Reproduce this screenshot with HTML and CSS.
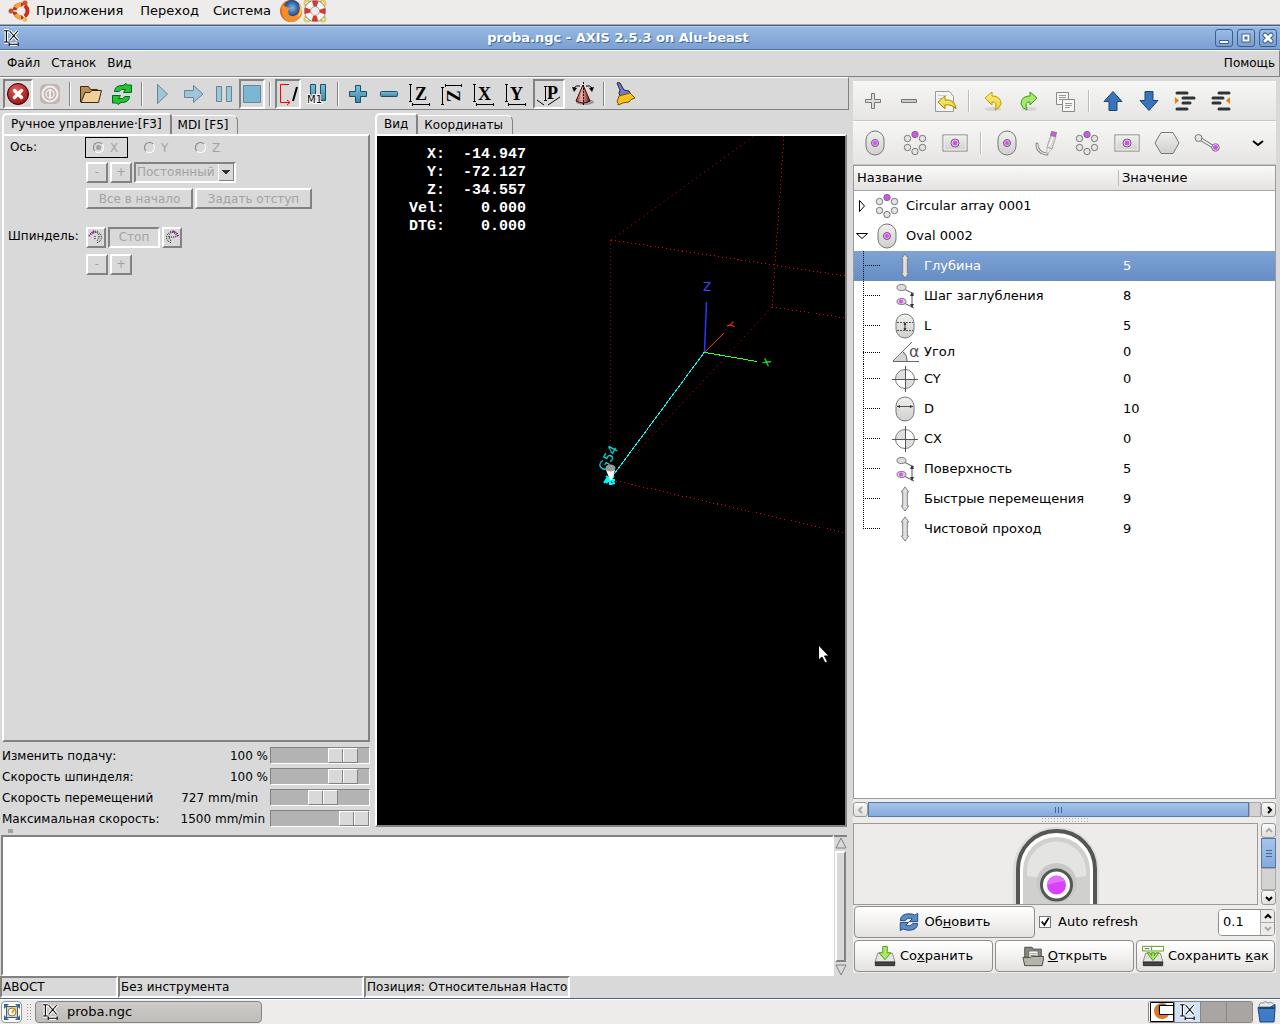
FILE: index.html
```html
<!DOCTYPE html>
<html lang="ru">
<head>
<meta charset="utf-8">
<title>proba.ngc - AXIS 2.5.3 on Alu-beast</title>
<link rel="stylesheet" href="styles.css">
</head>
<body>
<svg class="defs" width="0" height="0" aria-hidden="true">
  <defs>
    <linearGradient id="gray" x1="0" y1="0" x2="0" y2="1"><stop offset="0" stop-color="#f0f0ee"/><stop offset="1" stop-color="#cfcfcd"/></linearGradient>
    <linearGradient id="teal" x1="0" y1="0" x2="0" y2="1"><stop offset="0" stop-color="#7cc0da"/><stop offset="1" stop-color="#3d87aa"/></linearGradient>
    <linearGradient id="yellow" x1="0" y1="0" x2="0" y2="1"><stop offset="0" stop-color="#fff08a"/><stop offset="1" stop-color="#edd020"/></linearGradient>
    <linearGradient id="cone" x1="0" y1="0" x2="1" y2="0"><stop offset="0" stop-color="#8c3b3b"/><stop offset=".4" stop-color="#f3a8a0"/><stop offset="1" stop-color="#5c1c1c"/></linearGradient>
    <radialGradient id="red" cx=".4" cy=".3" r=".8"><stop offset="0" stop-color="#e85a5a"/><stop offset="1" stop-color="#9c0808"/></radialGradient>
    <radialGradient id="globe"><stop offset="0" stop-color="#7fb8e8"/><stop offset="1" stop-color="#1c4588"/></radialGradient>
  </defs>
  <symbol id="axis" viewBox="0 0 16 16"><g fill="none" stroke="#fff" stroke-width="3"><path d="M3 2v9M1 1.500h4M1 11.500h4M6 2l7 8M13 2l-7 8M5 13.500h9"/></g><path fill="none" stroke="#000" d="M3 2v9M1 1.500h4M1 11.500h4M6 2l7 8M13 2l-7 8M5 13.500h9M5.500 12v3M13.500 12v3"/></symbol>
  <symbol id="oval" viewBox="0 0 24 26"><rect x="3" y="1" width="18" height="24" rx="9" fill="url(#gray)" stroke="#777" /><circle cx="12" cy="13" r="3.500" fill="#d850f4" stroke="#666"/><circle cx="12" cy="13" r="2.500" fill="none" stroke="#f4c8ff" stroke-width=".7"/></symbol>
  <symbol id="ring" viewBox="0 0 24 26"><g fill="#e4e4e2" stroke="#777"><circle cx="4.500" cy="8.500" r="3.200"/><circle cx="19.500" cy="8.500" r="3.200"/><circle cx="4.500" cy="17.500" r="3.200"/><circle cx="19.500" cy="17.500" r="3.200"/><circle cx="12" cy="21.500" r="3.200"/><circle cx="12" cy="4.500" r="3.200" fill="#d850f4"/></g></symbol>
  <symbol id="rect" viewBox="0 0 26 26"><rect x="1" y="5" width="24" height="16" fill="url(#gray)" stroke="#777"/><rect x="2" y="6" width="22" height="14" fill="none" stroke="#f4f4f4"/><circle cx="13" cy="13" r="4" fill="#d850f4" stroke="#666"/><circle cx="13" cy="13" r="3" fill="none" stroke="#f4c8ff"/></symbol>
  <symbol id="depth" viewBox="0 0 26 28"><path fill="#e0e0de" stroke="#777" d="M13 1l4 5.500h-1.500v15h1.500L13 27l-4-5.500h1.500v-15H9z"/></symbol>
  <symbol id="step" viewBox="0 0 26 26"><path fill="none" stroke="#555" d="M12 6l10 5M12 20l10 5M20 10v14"/><path fill="#333" d="M18 13l2-4 2 4zM18 21l2 4 2-4z"/><ellipse cx="9.500" cy="4.500" rx="4.500" ry="3" fill="#ddd" stroke="#777"/><ellipse cx="9.500" cy="18.500" rx="4.500" ry="3" fill="#e4c0ea" stroke="#777"/><circle cx="9" cy="18.500" r="2" fill="#d850f4"/></symbol>
  <symbol id="len" viewBox="0 0 26 26"><rect x="4" y="1" width="18" height="24" rx="9" fill="url(#gray)" stroke="#777"/><path fill="none" stroke="#555" stroke-dasharray="2 1" d="M5 9.500h16M5 17.500h16"/><path stroke="#333" d="M13 10v7"/><path fill="#333" d="M11.500 12l1.500-3 1.500 3zM11.500 15l1.500 3 1.500-3z"/></symbol>
  <symbol id="dia" viewBox="0 0 26 26"><rect x="4" y="1" width="18" height="24" rx="9" fill="url(#gray)" stroke="#777"/><path stroke="#555" d="M5 10.500h16"/><path fill="#333" d="M5 10.500l3-1.500v3zM21 10.500l-3-1.500v3z"/></symbol>
  <symbol id="center" viewBox="0 0 26 26"><circle cx="13" cy="13" r="9" fill="#fff"/><path fill="#dededc" d="M13 13V4a9 9 0 0 0-9 9zM13 13v9a9 9 0 0 0 9-9z"/><circle cx="13" cy="13" r="9.500" fill="none" stroke="#777"/><path stroke="#555" d="M0 13.500h26M13.500 0v26"/></symbol>
</svg>

<nav class="panel top">
  <svg class="ic24" viewBox="0 0 24 24"><path fill="none" stroke="#e0902c" stroke-width="4" d="M8 8a7 7 0 0 1 5-2.500"/><circle cx="14" cy="12" r="6.500" fill="none" stroke="#c8301c" stroke-width="4"/><path fill="none" stroke="#f0a838" stroke-width="4" d="M14 5.500a6.500 6.500 0 0 0-5.500 3M8.500 15.500a6.500 6.500 0 0 0 5.500 3"/><path stroke="#edeceb" stroke-width="1.500" d="M5 12h5M18 5l-3 4M18 19l-3-4"/><circle cx="4" cy="12" r="2.500" fill="#c8502c"/><circle cx="18" cy="4" r="2.500" fill="#d85020"/><circle cx="18" cy="20.500" r="2.300" fill="#f0b840"/></svg>
  <a href="#">Приложения</a><a href="#">Переход</a><a href="#">Система</a>
  <svg class="ic24" viewBox="0 0 24 24"><circle cx="12" cy="12" r="11" fill="#d8661c"/><circle cx="13" cy="9" r="8" fill="url(#globe)"/><path fill="#f0902c" d="M3 5l4 3 4 1-2 3 1 4q5 3 9-1 3-4 1-11 6 8 1 15-6 6-13 3-7-5-5-17z"/><path fill="#ffd34a" d="M20 5q3 8-2 13 5-2 5-9z"/></svg>
  <svg class="ic24" viewBox="0 0 24 24"><g fill="none" stroke="#e4c858" stroke-width="2"><circle cx="4" cy="4" r="2.500"/><circle cx="20" cy="4" r="2.500"/><circle cx="4" cy="20" r="2.500"/><circle cx="20" cy="20" r="2.500"/></g><circle cx="12" cy="12" r="7.500" fill="none" stroke="#888" stroke-width="7"/><circle cx="12" cy="12" r="7.500" fill="none" stroke="#f8f8f8" stroke-width="5.500"/><circle cx="12" cy="12" r="7.500" fill="none" stroke="#d83828" stroke-width="5.500" stroke-dasharray="4.890 6.890" stroke-dashoffset="2.450"/></svg>
</nav>

<header class="titlebar">
  <svg class="ic18"><use href="#axis"/></svg>
  <h1>proba.ngc - AXIS 2.5.3 on Alu-beast</h1>
  <div class="wm">
    <button aria-label="Свернуть"><svg viewBox="0 0 16 16"><path fill="#fff" stroke="#3a6090" d="M3.500 10.500h9v3h-9z"/></svg></button>
    <button aria-label="Развернуть"><svg viewBox="0 0 16 16"><path fill="none" stroke="#3a6090" stroke-width="4" d="M5.500 5.500h5v5h-5z"/><path fill="none" stroke="#fff" stroke-width="2" d="M5.500 5.500h5v5h-5z"/></svg></button>
    <button aria-label="Закрыть"><svg viewBox="0 0 16 16"><path stroke="#3a6090" stroke-width="5" stroke-linecap="round" d="M5 5l6 6M11 5l-6 6"/><path stroke="#fff" stroke-width="3" stroke-linecap="round" d="M5 5l6 6M11 5l-6 6"/></svg></button>
  </div>
</header>

<nav class="menu"><a href="#">Файл</a><a href="#">Станок</a><a href="#">Вид</a><a href="#" class="help">Помощь</a></nav>

<main class="app">
<section class="axis">
  <div class="tools">
    <button class="on" aria-label="Аварийный стоп"><svg viewBox="0 0 24 24"><circle cx="12" cy="12" r="10.500" fill="url(#red)" stroke="#200"/><path stroke="#fff" stroke-width="3.500" stroke-linecap="round" d="M8.500 8.500l7 7M15.500 8.500l-7 7"/></svg></button>
    <button aria-label="Питание"><svg class="dis" viewBox="0 0 24 24"><rect x="2" y="2" width="20" height="20" rx="5" fill="#b8a098"/><circle cx="12" cy="12" r="7.500" fill="none" stroke="#fff" stroke-width="2"/><circle cx="12" cy="12" r="4" fill="none" stroke="#fff" stroke-width="1.500"/><path stroke="#fff" stroke-width="2" d="M12 7v10"/></svg></button>
    <i class="sep"></i>
    <button aria-label="Открыть файл"><svg viewBox="0 0 24 24"><path fill="#b98f55" stroke="#3a2a10" d="M2.500 20V4.500h8l2 3h7v4"/><path fill="#f1cf98" stroke="#3a2a10" d="M3 20.500l4-10h5l2-2h9.500l-3 12z"/></svg></button>
    <button aria-label="Перезагрузить"><svg viewBox="0 0 24 24"><path fill="#25c52a" stroke="#063" d="M4.500 9.500Q5 3 13 3.500l3-2 1.500 1.500h4v7.500h-8l2-3q-5-1-6.500 2zM19.500 14.500q-.5 6.500-8.500 6l-3 2-1.500-1.500h-4v-7.500h8l-2 3q5 1 6.500-2z"/></svg></button>
    <i class="sep"></i>
    <button aria-label="Пуск"><svg class="dis" viewBox="0 0 24 24"><path fill="#7ab8d8" stroke="#17506b" d="M7.500 2.500l10 9.500-10 9.500z"/></svg></button>
    <button aria-label="Шаг"><svg class="dis" viewBox="0 0 24 24"><path fill="#7ab8d8" stroke="#17506b" d="M2.500 8.500h9v-5l9.500 8.500-9.500 8.500v-5h-9z"/></svg></button>
    <button class="n" aria-label="Пауза"><svg class="dis" viewBox="0 0 24 24"><path fill="#7ab8d8" stroke="#17506b" d="M4.500 4.500h5v15h-5zM14.500 4.500h5v15h-5z"/></svg></button>
    <button class="n on" aria-label="Стоп"><svg class="dis" viewBox="0 0 24 24"><path fill="#3ea0d4" stroke="#17506b" d="M3.500 3.500h17v17h-17z"/></svg></button>
    <i class="sep"></i>
    <button class="n on" aria-label="Пропуск строк"><svg viewBox="0 0 24 24"><path fill="none" stroke="#f00" d="M13 2.500H4.500v18h9M11 18l3 2.500-3 2.500"/><path stroke="#000" stroke-width="2" d="M21 5l-4 14"/></svg></button>
    <button aria-label="Опциональный стоп"><svg viewBox="0 0 24 24"><path fill="url(#teal)" stroke="#17506b" d="M4.500 2.500h5v16h-5zM14.500 2.500h5v16h-5z"/><text x="1" y="21" font-family="DejaVu Sans" font-size="10" stroke="#fff" stroke-width="2" paint-order="stroke">M1</text></svg></button>
    <i class="sep"></i>
    <button aria-label="Приблизить"><svg viewBox="0 0 24 24"><path fill="url(#teal)" stroke="#17506b" d="M9.500 3.500h5v6h6v5h-6v6h-5v-6h-6v-5h6z"/></svg></button>
    <button class="m" aria-label="Отдалить"><svg viewBox="0 0 24 24"><rect x="3.500" y="9.500" width="17" height="5" rx="1" fill="url(#teal)" stroke="#17506b"/></svg></button>
    <button aria-label="Вид Z"><svg viewBox="0 0 24 24"><path fill="none" stroke="#000" d="M2.500 2v17M1 2.500h3M1 19.500h3M4 22.500h18M4.500 21v3M21.500 21v3"/><text x="7" y="18" class="ax">Z</text></svg></button>
    <button aria-label="Вид Z повёрнутый"><svg viewBox="0 0 24 24"><path fill="none" stroke="#000" d="M2.500 5v17M1 5.500h3M1 22.500h3M5 3.500h17M5.500 2v3M21.500 2v3"/><text class="ax" transform="translate(7 8) rotate(90)">Z</text></svg></button>
    <button aria-label="Вид X"><svg viewBox="0 0 24 24"><path fill="none" stroke="#000" d="M2.500 2v17M1 2.500h3M1 19.500h3M4 22.500h18M4.500 21v3M21.500 21v3"/><text x="6" y="18" class="ax">X</text></svg></button>
    <button aria-label="Вид Y"><svg viewBox="0 0 24 24"><path fill="none" stroke="#000" d="M2.500 2v17M1 2.500h3M1 19.500h3M4 22.500h18M4.500 21v3M21.500 21v3"/><text x="6" y="18" class="ax">Y</text></svg></button>
    <button class="w on" aria-label="Перспектива"><svg viewBox="0 0 24 24"><path fill="none" stroke="#000" d="M8.500 4v14M7 4.500h3M7 18.500h3M0 18l7 5M11 23l12-8"/><text x="10" y="17" class="ax">P</text></svg></button>
    <button class="w" aria-label="Вращение"><svg viewBox="0 0 24 24"><ellipse cx="14" cy="20" rx="9" ry="3" fill="#999"/><path fill="url(#cone)" stroke="#400" d="M12 3l7 16q-7 4-14 0z"/><path fill="none" stroke="#000" d="M3 6q2-3 6-2M21 6q-2-3-6-2"/><path d="M1 5l5 1-3 4zM23 5l-5 1 3 4z"/><path stroke="#000" stroke-dasharray="2 1" d="M12.500 0v24"/></svg></button>
    <i class="sep"></i>
    <button class="w" aria-label="Очистить"><svg viewBox="0 0 24 24"><path fill="#6f7cc8" stroke="#223" d="M4 1q2-1 3 0l4 7 5 1 2 4-10 4-2-6 1-3z"/><path fill="#f5c220" stroke="#7a5000" d="M6 14l11-3 5 5q-5 1-6 4-5 0-11 3 1-2-1-3z"/></svg></button>
  </div>

  <div class="work">
    <div class="side">
      <div class="tabs"><button class="tab cur">Ручное управление·[F3]</button><button class="tab">MDI [F5]</button></div>
      <div class="page manual">
        <span class="lab">Ось:</span>
        <div class="line radios">
          <label class="boxed"><input type="radio" name="ax" checked disabled>X</label><label><input type="radio" name="ax" disabled>Y</label><label><input type="radio" name="ax" disabled>Z</label>
        </div>
        <div class="line c2"><button class="tk s" disabled>-</button><button class="tk s" disabled>+</button>
          <select class="combo" aria-label="Шаг перемещения" disabled><option>Постоянный</option></select></div>
        <div class="line c2"><button class="tk home" disabled>Все в начало</button><button class="tk off" disabled>Задать отступ</button></div>
        <span class="lab low">Шпиндель:</span>
        <div class="line low">
          <button class="tk i" aria-label="Против часовой"><svg viewBox="0 0 16 16"><path fill="none" stroke="#000" stroke-dasharray="1 1" d="M2 5q6-6 11 1 2 6-5 8M5 4q6-2 6 4 0 3-3 4M7 7v3"/><path stroke="#a0a" stroke-dasharray="1 1" stroke-width="2" d="M1 7l5-5"/></svg></button><button class="tk stop" disabled>Стоп</button><button class="tk i" aria-label="По часовой"><svg viewBox="0 0 16 16"><path fill="none" stroke="#000" stroke-dasharray="1 1" d="M14 5Q8-1 3 6q-2 6 5 8M11 4Q5 2 5 8q0 3 3 4M5 8h6l4-2"/><path stroke="#a0a" stroke-dasharray="1 1" stroke-width="2" d="M9 2l5 5"/></svg></button>
        </div>
        <div class="line c2"><button class="tk s" disabled>-</button><button class="tk s" disabled>+</button></div>
      </div>
      <div class="sliders">
        <label for="s1">Изменить подачу:</label><output>100 %</output><input id="s1" type="range" min="0" max="120" value="100">
        <label for="s2">Скорость шпинделя:</label><output>100 %</output><input id="s2" type="range" min="0" max="120" value="100">
        <label for="s3">Скорость перемещений</label><output class="mm">727 mm/min</output><input id="s3" type="range" min="0" max="100" value="55">
        <label for="s4">Максимальная скорость:</label><output class="mx">1500 mm/min</output><input id="s4" type="range" min="0" max="100" value="100">
      </div>
    </div>
    <div class="viewer">
      <div class="tabs"><button class="tab cur">Вид</button><button class="tab">Координаты</button></div>
      <div class="page gl">
        <svg class="scene"><g transform="translate(-377 -136)">
          <path fill="none" stroke="#e00" stroke-dasharray="1 3" shape-rendering="crispEdges" d="M611 240l234 36M784 136l-12 171M772 307l73 11M612 480l233 53"/>
          <path fill="none" stroke="#a00" stroke-dasharray="1 3" shape-rendering="crispEdges" d="M610.500 240v230"/>
          <path fill="none" stroke="#e00" stroke-dasharray="1 4" d="M611 240L754 136M772 307L612 479"/>
          <path stroke="#0ff" shape-rendering="crispEdges" d="M704.500 352L612 477"/>
          <path stroke="#33f" stroke-width="1.500" d="M706.500 302l-2 50"/><path stroke="#f33" d="M705 352l19-19"/><path stroke="#3f3" shape-rendering="crispEdges" d="M705 352.500l52 9"/>
          <g class="gltext"><text x="703" y="291" fill="#44f">Z</text><text fill="#f33" font-size="10" transform="translate(726 323) rotate(75)">Y</text><text fill="#3f3" font-size="10" transform="translate(768 367) rotate(-60)">X</text><text fill="#0dd" font-size="13" transform="translate(606 472) rotate(-62)">G54</text></g>
          <path fill="none" stroke="#0ff" stroke-width="2" d="M605 480h10M606 476l8 6M614 476l-8 7M610 475v10M604 483l4-6M611 484l4-1"/><path fill="#fff" d="M606 470h9l-3 10h-2z"/><ellipse cx="610.500" cy="468" rx="5" ry="3.500" fill="#999"/>
          <path fill="#fff" stroke="#000" d="M818.500 645v15l3.500-3 3 6 2.500-1.500-3-5.500h4.500z"/>
        </g></svg>
        <pre class="hud">  X:  -14.947
  Y:  -72.127
  Z:  -34.557
Vel:    0.000
DTG:    0.000</pre>
      </div>
    </div>
  </div>

  <div class="sash"></div>
  <div class="log">
    <textarea aria-label="Программа" readonly></textarea>
    <div class="tkscroll"><svg viewBox="0 0 12 12"><path fill="#d9d9d9" stroke="#828282" d="M6 1l5 10H1z"/></svg><i></i><svg viewBox="0 0 12 12"><path fill="#d9d9d9" stroke="#828282" d="M6 11L1 1h10z"/></svg></div>
  </div>
  <footer class="status"><span class="a">АВОСТ</span><span class="b">Без инструмента</span><span class="c">Позиция: Относительная Настоящая</span></footer>
</section>

<aside class="cam">
  <div class="bar one">
    <button aria-label="Добавить"><svg viewBox="0 0 24 24"><path fill="#ddd" stroke="#777" d="M10.500 4.500h3v6h6v3h-6v6h-3v-6h-6v-3h6z"/></svg></button>
    <button aria-label="Удалить"><svg viewBox="0 0 24 24"><path fill="#ccc" stroke="#777" d="M4.500 10.500h15v3h-15z"/></svg></button>
    <button aria-label="Вернуть"><svg viewBox="0 0 24 24"><path fill="#f4f4f2" stroke="#999" d="M2.500 2.500h14l4 5v15h-18z"/><path stroke="#ccc" d="M5 6.500h9M5 9.500h6"/><path fill="url(#yellow)" stroke="#a08800" d="M5 13l7-6v4q10-1 11 9-4-5-11-4v4z"/></svg></button>
    <i class="vs"></i>
    <button aria-label="Отменить"><svg viewBox="0 0 24 24"><ellipse cx="12" cy="20" rx="8" ry="2" fill="#d4d4d2"/><path fill="url(#yellow)" stroke="#c09a10" d="M4 9l7-6v4q9 0 9 8-1 4-6 6 3-9-3-8v3z"/></svg></button>
    <button aria-label="Повторить"><svg viewBox="0 0 24 24"><ellipse cx="12" cy="20" rx="8" ry="2" fill="#d4d4d2"/><path fill="#a4e86c" stroke="#3f9a1c" d="M20 9l-7-6v4q-9 0-9 8 1 4 6 6-3-9 3-8v3z"/></svg></button>
    <button aria-label="Копировать"><svg viewBox="0 0 24 24"><g fill="#f6f6f4" stroke="#888"><path d="M3.500 3.500h12v12h-12z"/><path d="M9.500 10.500h12v12h-12z"/></g><path stroke="#999" d="M6 6.500h7M6 8.500h7M6 10.500h3M12 14.500h7M12 16.500h7M12 18.500h5"/></svg></button>
    <i class="vs"></i>
    <button aria-label="Вверх"><svg viewBox="0 0 24 24"><path fill="#3a74b8" stroke="#1c4578" d="M12 2.500l9 10h-5v9H8v-9H3z"/></svg></button>
    <button aria-label="Вниз"><svg viewBox="0 0 24 24"><path fill="#3a74b8" stroke="#1c4578" d="M12 21.500l9-10h-5v-9H8v9H3z"/></svg></button>
    <button aria-label="Увеличить отступ"><svg viewBox="0 0 24 24"><path stroke="#2e3436" stroke-width="3" stroke-linecap="round" d="M4 4h10M10 9h11M10 14h7M4 20h10"/><path fill="#f57900" d="M2 8v7l4-3.500z"/></svg></button>
    <button aria-label="Уменьшить отступ"><svg viewBox="0 0 24 24"><path stroke="#2e3436" stroke-width="3" stroke-linecap="round" d="M10 4h10M4 9h10M4 14h7M10 20h10"/><path fill="#f57900" d="M21 8v7l-4-3.500z"/></svg></button>
  </div>
  <div class="bar two">
    <button aria-label="Овал"><svg class="ic26"><use href="#oval"/></svg></button>
    <button aria-label="Круговой массив"><svg class="ic26"><use href="#ring"/></svg></button>
    <button aria-label="Прямоугольник"><svg class="ic26"><use href="#rect"/></svg></button>
    <i class="vs"></i>
    <button aria-label="Овал"><svg class="ic26"><use href="#oval"/></svg></button>
    <button aria-label="Карандаш"><svg class="ic26" viewBox="0 0 26 26"><path fill="none" stroke="#888" stroke-width="3" stroke-linecap="round" d="M3 14q0 9 10 10"/><path fill="none" stroke="#fff" d="M3 14q0 9 10 10"/><path fill="#f4ece0" stroke="#bbb" d="M13 17l5 2-5 5z"/><path fill="#dcd8dc" stroke="#aaa" d="M17 5l5 1-4 13-5-2z"/><path stroke="#fff" d="M19 7l-4 10"/><path fill="#d850f4" stroke="#977" d="M17.500 1.500l5 1-1 4-5-1z"/></svg></button>
    <button aria-label="Массив"><svg class="ic26"><use href="#ring"/></svg></button>
    <button aria-label="Карман"><svg class="ic26"><use href="#rect"/></svg></button>
    <button aria-label="Многоугольник"><svg class="ic26" viewBox="0 0 26 26"><path fill="url(#gray)" stroke="#777" d="M7 2.500h12l6 10.500-6 10.500H7L1 13z"/></svg></button>
    <button aria-label="Линия"><svg class="ic26" viewBox="0 0 26 26"><path stroke="#777" stroke-width="3.500" d="M5 8l16 10"/><path stroke="#eee" stroke-width="1.500" d="M5 8l16 10"/><circle cx="4.500" cy="8" r="3.500" fill="#e4e4e2" stroke="#777"/><circle cx="21.500" cy="17.500" r="3.800" fill="#f0e0f4" stroke="#777"/><circle cx="21.500" cy="17.500" r="2.500" fill="#d850f4"/></svg></button>
    <button class="more" aria-label="Ещё"><svg viewBox="0 0 24 24"><path fill="none" stroke="#000" stroke-width="2" d="M7 10l5 4 5-4"/></svg></button>
  </div>
  <div class="tree">
    <table>
      <thead><tr><th class="name">Название</th><th>Значение</th></tr></thead>
      <tbody>
      <tr><td><div class="node"><svg class="exp" viewBox="0 0 16 16"><path fill="#fff" stroke="#000" d="M5.500 2.500v11l5-5.500z"/></svg><svg class="ni"><use href="#ring"/></svg>Circular array 0001</div></td><td></td></tr>
      <tr><td><div class="node"><svg class="exp" viewBox="0 0 16 16"><path fill="#fff" stroke="#000" d="M2.500 5.500h11l-5.500 5z"/></svg><svg class="ni"><use href="#oval"/></svg>Oval 0002</div></td><td></td></tr>
      <tr class="sel"><td><div class="node kid"><i class="br"></i><svg class="ni"><use href="#depth"/></svg>Глубина</div></td><td>5</td></tr>
      <tr><td><div class="node kid"><i class="br"></i><svg class="ni"><use href="#step"/></svg>Шаг заглубления</div></td><td>8</td></tr>
      <tr><td><div class="node kid"><i class="br"></i><svg class="ni"><use href="#len"/></svg>L</div></td><td>5</td></tr>
      <tr><td><div class="node kid short"><i class="br"></i><svg class="ni" viewBox="0 0 30 22"><path fill="#d4d4d2" d="M4 20L14 10q4 4 3 10z"/><path fill="none" stroke="#666" d="M3 20.500h26M3 20L22 1M13 11q5 4 4 9"/><text x="19" y="16" font-family="DejaVu Sans" font-size="16" fill="#555">α</text></svg>Угол</div></td><td>0</td></tr>
      <tr><td><div class="node kid"><i class="br"></i><svg class="ni"><use href="#center"/></svg>CY</div></td><td>0</td></tr>
      <tr><td><div class="node kid"><i class="br"></i><svg class="ni"><use href="#dia"/></svg>D</div></td><td>10</td></tr>
      <tr><td><div class="node kid"><i class="br"></i><svg class="ni"><use href="#center"/></svg>CX</div></td><td>0</td></tr>
      <tr><td><div class="node kid"><i class="br"></i><svg class="ni"><use href="#step"/></svg>Поверхность</div></td><td>5</td></tr>
      <tr><td><div class="node kid"><i class="br"></i><svg class="ni"><use href="#depth"/></svg>Быстрые перемещения</div></td><td>9</td></tr>
      <tr><td><div class="node kid"><i class="br end"></i><svg class="ni"><use href="#depth"/></svg>Чистовой проход</div></td><td>9</td></tr>
      </tbody>
    </table>
  </div>
  <div class="hscroll"><button aria-label="Влево"><svg viewBox="0 0 12 12"><path fill="none" stroke="#aaa" stroke-width="2" d="M7 3L4 6l3 3"/></svg></button><span class="thumb"><i></i><i></i><i></i></span><span class="rest"></span><button aria-label="Вправо"><svg viewBox="0 0 12 12"><path fill="none" stroke="#000" stroke-width="2" d="M5 3l3 3-3 3"/></svg></button></div>
  <div class="grip"></div>
  <div class="preview">
    <div class="shot"><svg viewBox="0 0 88 80"><rect x="1" y="3" width="86" height="140" rx="43" fill="#dddddb"/><rect x="6" y="7" width="77" height="140" rx="38" fill="#fff" stroke="#555753" stroke-width="4"/><rect x="11" y="13" width="67" height="130" rx="33" fill="#d0d0ce"/><path fill="#e4e4e2" d="M15 52V47a29 29 0 0 1 59 0v5q-30 5-59 0z"/><circle cx="44.500" cy="59" r="20" fill="#c8c8c6"/><circle cx="44.500" cy="61" r="15" fill="#fff" stroke="#555753" stroke-width="3"/><circle cx="44.500" cy="61" r="9.500" fill="#d940ff"/><path fill="#e470ff" d="M35 61a9.500 9.500 0 0 1 18-4q-9 1-18 4z"/></svg></div>
    <div class="vscroll"><button aria-label="Вверх"><svg viewBox="0 0 12 12"><path fill="none" stroke="#aaa" stroke-width="2" d="M3 7l3-3 3 3"/></svg></button><span class="thumb"><i></i><i></i><i></i></span><span class="rest"></span><button aria-label="Вниз"><svg viewBox="0 0 12 12"><path fill="none" stroke="#000" stroke-width="2" d="M3 5l3 3 3-3"/></svg></button></div>
  </div>
  <div class="act">
    <button class="gtk upd"><svg viewBox="0 0 24 24"><path fill="#5a8cc8" stroke="#1c4578" d="M2.500 10.500Q3 3 12 3q4 0 6.500 1.500l3-2v9h-9l3-3q-5-2-7.500 2zM21.500 13.500Q21 21 12 21q-4 0-6.500-1.500l-3 2v-9h9l-3 3q5 2 7.500-2z"/></svg><span>Об<u>н</u>овить</span></button>
    <label class="auto"><input type="checkbox" checked>Auto refresh</label>
    <div class="spin"><input type="text" value="0.1" aria-label="Интервал"><div><button aria-label="Больше"><svg viewBox="0 0 12 12"><path fill="none" stroke="#000" stroke-width="2" d="M3 8l3-3 3 3"/></svg></button><button aria-label="Меньше"><svg viewBox="0 0 12 12"><path fill="none" stroke="#aaa" stroke-width="2" d="M3 4l3 3 3-3"/></svg></button></div></div>
  </div>
  <div class="act three">
    <button class="gtk"><svg viewBox="0 0 24 24"><path fill="#e4e4e2" stroke="#888" d="M4 9h16l3 10H1z"/><path fill="#444" stroke="#222" d="M1.500 18.500h21v4h-21z"/><path fill="#a4e86c" stroke="#4e9a06" d="M9.500 1.500h5v7h4L12 16 5.500 8.500h4z"/></svg><span>Со<u>х</u>ранить</span></button>
    <button class="gtk"><svg viewBox="0 0 24 24"><path fill="#8a8a7c" stroke="#44443c" d="M3 20V2.500h8l1 2h9V20z"/><path fill="#fff" stroke="#666" d="M7.500 6.500h10v9h-10z"/><path stroke="#888" d="M9 9.500h7M9 11.500h7"/><path fill="#b4b4a8" stroke="#44443c" d="M1 13.500h8l2-1h13l-2 10H3z"/></svg><span><u>О</u>ткрыть</span></button>
    <button class="gtk"><svg viewBox="0 0 24 24"><path fill="#e4e4e2" stroke="#888" d="M4 9h16l3 10H1z"/><path fill="#444" stroke="#222" d="M1.500 18.500h21v4h-21z"/><path fill="#a4e86c" stroke="#4e9a06" d="M5.500 8.500h3l2 3v-3h3v3l2-3h3L12 17z"/><path fill="#fff" stroke="#4e9a06" d="M.5 1.500h23v5H.5z"/><path stroke="#555" d="M3 4h5M10.500 2.500v3"/></svg><span>Сохранить <u>к</u>ак</span></button>
  </div>
</aside>
</main>

<footer class="panel task">
  <button class="desk" aria-label="Показать рабочий стол"><svg viewBox="0 0 16 16"><path fill="#d8d8d0" stroke="#555" d="M2.500 2.500h11v11h-11z"/><path fill="#3465a4" d="M0 0h5L0 5zM16 0h-5l5 5zM0 16h5l-5-5zM16 16h-5l5-5z"/><circle cx="8" cy="8" r="4" fill="#fffbe0" stroke="#777"/><path stroke="#f0a000" stroke-width="2" d="M8 9l3-5"/></svg></button>
  <i class="dots"></i>
  <button class="win"><svg class="ic18"><use href="#axis"/></svg>proba.ngc</button>
  <div class="pager">
    <span class="p1"><svg viewBox="0 0 24 20"><circle cx="12" cy="9" r="8" fill="#e07820"/><circle cx="13" cy="7" r="5" fill="#4a78b0"/><path fill="#fff" stroke="#000" d="M9.500 3.500h14v9h-14z"/><path fill="none" stroke="#000" d="M.5 .5h23v19H.5z"/></svg></span><span class="cur"><svg class="ic18"><use href="#axis"/></svg></span><span></span><span></span>
  </div>
  <svg class="trash" viewBox="0 0 20 22"><path fill="#e8e8e8" stroke="#888" d="M2 6q0-5 4-4 2-3 5 0 5-2 7 4z"/><path fill="#3f7cc8" stroke="#1c4578" d="M1 6.500h12l5-3v5l-1 12.500H3z"/><path fill="#1c4578" d="M2 6h16v2H2z"/></svg>
</footer>
</body>
</html>
```
FILE: styles.css
```css
* { box-sizing: border-box; }
body {
  margin: 0; min-height: 100vh; display: flex; flex-direction: column;
  background: #d9d9d9; color: #000; font: 12px/16px "DejaVu Sans", sans-serif; overflow: hidden;
}
a { color: inherit; text-decoration: none; }
button { font: inherit; color: inherit; margin: 0; padding: 0; border: 0; background: none; display: flex; align-items: center; justify-content: center; }
svg { display: block; flex: none; }
.defs { position: absolute; }
.ic18 { width: 18px; height: 18px; }
.ic24 { width: 24px; height: 24px; }
.ic26 { width: 26px; height: 26px; }

/* desktop panels */
.panel { display: flex; align-items: center; background: #edeceb; font-size: 13px; }
.top { height: 25px; padding: 0 7px 2px; border-bottom: 1px solid #b0aa98; }
.top a { margin: 0 10px 0 5px; }
.top a:first-of-type { margin-right: 13px; }
.top a + a { margin-left: 4px; }
.top a:last-of-type { margin-right: 8px; }

.titlebar { height: 25px; display: flex; align-items: center; padding: 0 3px; border-top: 1px solid #3d5f8a; border-bottom: 1px solid #4a70a2; background: linear-gradient(#98b9e4, #7ba0d2); box-shadow: inset 0 1px #b4cdee; }
.titlebar h1 { flex: 1; margin: 0; text-align: center; font: bold 13px/18px "DejaVu Sans", sans-serif; color: #fff; text-shadow: 1px 1px #44679a; }
.wm { display: flex; gap: 4px; }
.wm button { width: 18px; height: 18px; border: 1px solid #3a6090; border-radius: 3px; background: linear-gradient(#9bbce8, #7a9fd0); }
.wm svg { width: 16px; height: 16px; }

.menu { height: 27px; display: flex; align-items: center; gap: 11px; padding: 0 4px 1px 7px; border-top: 1px solid #fff; border-right: 1px solid #828282; border-bottom: 1px solid #828282; }
.help { margin-left: auto; }

.app { flex: 1; display: grid; grid-template-columns: minmax(0, 849fr) minmax(0, 431fr); }
.axis { display: flex; flex-direction: column; min-width: 0; }

/* toolbar */
.tools { display: flex; align-items: center; gap: 2px; height: 33px; padding: 0 3px; border-top: 1px solid #fff; border-right: 1px solid #828282; border-bottom: 1px solid #828282; }
.tools button { width: 30px; height: 30px; border: 2px solid transparent; }
.tools button.n { width: 26px; }
.tools button.m { width: 28px; }
.tools button.w { width: 32px; }
.tools button.on { border-color: #828282 #fff #fff #828282; }
.tools svg { width: 24px; height: 24px; }
.tools .dis { opacity: .6; }
.sep { width: 2px; height: 24px; margin: 0 2px; border-left: 1px solid #828282; border-right: 1px solid #fff; }
.ax { font: bold 18px "Liberation Serif", serif; }

/* notebooks */
.work { flex: 1; display: flex; gap: 5px; padding: 3px 2px 0; }
.side { width: 368px; display: flex; flex-direction: column; }
.viewer { flex: 1; min-width: 0; display: flex; flex-direction: column; }
.tabs { display: flex; align-items: flex-end; height: 21px; }
.tab { height: 19px; padding: 0 9px 0 6px; border: 1px solid #fff; border-right-color: #828282; border-bottom: 0; border-left: 0; border-radius: 0 6px 0 0; }
.tab.cur { height: 21px; padding: 0 8px 1px 7px; border: 2px solid #fff; border-right-color: #828282; border-bottom: 0; border-radius: 5px 4px 0 0; }
.page { flex: 1; border: 2px solid; border-color: #fff #828282 #828282 #fff; }
.manual { display: grid; grid-template: 23px 26px 27px 38px 28px / 78px 1fr; align-content: start; padding: 0 4px; }
.lab { padding: 3px 2px 0; white-space: nowrap; }
.lab.low { padding: 0; align-self: end; height: 22px; }
.line { display: flex; align-items: center; gap: 2px; }
.line.low { height: 26px; align-self: end; }
.c2 { grid-column: 2; }
.radios { gap: 0; margin-left: -1px; color: #a3a3a3; }
.radios label { display: flex; align-items: center; gap: 6px; width: 51px; height: 21px; padding-left: 7px; }
.radios .boxed { width: 43px; margin-right: 9px; border: 1px solid #000; }
.radios input { appearance: none; width: 11px; height: 11px; margin: 0; border: 1px solid; border-color: #828282 #fff #fff #828282; border-radius: 50%; }
.radios input:checked { background: radial-gradient(#a3a3a3 2px, transparent 3px); }
.tk { height: 21px; border: 2px solid; border-color: #fff #828282 #828282 #fff; color: #a3a3a3; }
.tk.s { width: 22px; }
.tk.i { width: 20px; }
.tk.i svg { width: 16px; height: 16px; }
.tk.home { width: 107px; }
.tk.off { width: 117px; }
.tk.stop { width: 52px; border-color: #828282 #fff #fff #828282; }
.combo { appearance: none; width: 102px; height: 21px; margin: 0; padding: 0 0 0 1px; border: 2px solid; border-color: #828282 #fff #fff #828282; border-radius: 0; font: inherit; color: #a3a3a3; opacity: 1; background: linear-gradient(45deg, transparent 50%, #333 50%) right 8px top 6px / 4px 4px no-repeat, linear-gradient(-45deg, transparent 50%, #333 50%) right 4px top 6px / 4px 4px no-repeat, linear-gradient(#fff, #fff) right 15px top 0 / 1px 17px no-repeat, linear-gradient(#828282, #828282) right 0 top 0 / 1px 17px no-repeat, linear-gradient(#828282, #828282) right 0 bottom 0 / 15px 1px no-repeat, #d9d9d9; }

.sliders { display: grid; grid-template-columns: auto 1fr 100px; column-gap: 1px; grid-auto-rows: 21px; align-items: center; padding-top: 3px; height: 85px; }
.sliders output { text-align: right; padding-right: 1px; }
.sliders .mm { padding-right: 11px; }
.sliders .mx { padding-right: 4px; }
.sliders label { white-space: nowrap; }
.sliders input { appearance: none; width: 100px; height: 17px; margin: 0; background: #b3b3b3; border: 1px solid; border-color: #828282 #fff #fff #828282; }
.sliders input::-webkit-slider-thumb { appearance: none; width: 30px; height: 15px; border: 1px solid; border-color: #fff #828282 #828282 #fff; background: linear-gradient(90deg, transparent 13px, #828282 13px 14px, #fff 14px 15px, transparent 15px), #d9d9d9; }

.gl { display: grid; background: #000; overflow: hidden; }
.gl > * { grid-area: 1 / 1; }
.scene { width: 100%; height: 100%; min-height: 0; contain: size; }
.gltext { font: 12px "DejaVu Sans", sans-serif; }
.hud { margin: 10px 0 0 32px; font: bold 15px/18px "Liberation Mono", monospace; color: #fff; align-self: start; justify-self: start; }

.sash { height: 8px; margin: 0 0 0 8px; background: linear-gradient(#a0a0a0, #a0a0a0) 0 2px / 5px 4px no-repeat; }
.log { height: 141px; display: flex; padding: 0 2px 0 1px; }
.log textarea { flex: 1; resize: none; margin: 0; padding: 0; border: 2px solid; border-color: #828282 #fff #fff #828282; background: #fff; outline: 0; overflow: hidden; }
.tkscroll { width: 13px; display: flex; flex-direction: column; align-items: center; gap: 2px; background: #d9d9d9; border: solid #828282; border-width: 2px 0 0; }
.tkscroll svg { width: 12px; height: 12px; }
.tkscroll i { flex: 1; width: 11px; border: 2px solid; border-color: #fff #828282 #828282 #fff; }
.status { display: flex; height: 22px; }
.status span { overflow: hidden; white-space: nowrap; border: 2px solid; border-color: #828282 #fff #fff #828282; line-height: 18px; padding-left: 1px; }
.a { width: 118px; }
.b { width: 246px; }
.c { width: 206px; }

/* CAM panel */
.cam { margin: 4px 4px 25px; display: flex; flex-direction: column; background: #edeceb; font-size: 13px; }
.bar { display: flex; align-items: center; padding: 0 2px; background: linear-gradient(#f6f6f5, #e6e5e3); border-bottom: 1px solid #c8c7c5; }
.one { height: 40px; }
.two { height: 44px; border-top: 1px solid #fff; }
.bar button { width: 36px; height: 36px; }
.two button { width: 40px; }
.bar button svg:not(.ic26) { width: 24px; height: 24px; }
.bar .more { width: 24px; margin: 0 4px 0 auto; }
.vs { width: 2px; height: 22px; margin: 0 5px; border-left: 1px solid #bbb; border-right: 1px solid #fff; }
.tree { flex: 1; background: #fff; border: 1px solid #9b9a98; }
table { width: 100%; border-collapse: collapse; table-layout: fixed; }
th { height: 24px; padding: 0 3px; text-align: left; font-weight: normal; background: linear-gradient(#f9f9f8, #e4e3e1); border-bottom: 1px solid #aaa9a7; }
th.name { width: 264px; }
th + th { padding-left: 4px; background: linear-gradient(#bbb, #bbb) 0 4px / 1px 16px no-repeat, linear-gradient(#f9f9f8, #e4e3e1); }
td { padding: 0; }
td + td { padding: 0 5px; }
.node { display: flex; align-items: center; height: 30px; white-space: nowrap; }
.node.short { height: 23px; }
.kid { padding-left: 9px; }
.exp { width: 16px; height: 16px; }
.ni { width: 30px; height: 26px; margin: 0 4px 0 2px; }
.kid .ni { margin-left: 9px; }
.short .ni { height: 22px; }
.br { flex: none; width: 18px; height: 100%; background: repeating-linear-gradient(#000 0 1px, transparent 1px 2px) 0 0 / 1px 100% no-repeat, repeating-linear-gradient(90deg, #000 0 1px, transparent 1px 2px) 0 50% / 18px 1px no-repeat; }
.br.end { background-size: 1px 50%, 18px 1px; }
.sel { background: linear-gradient(#7ea2d4, #658ec4); color: #fff; }

.hscroll { display: flex; height: 15px; margin-top: 3px; }
.hscroll button, .vscroll button { width: 15px; height: 15px; border: 1px solid #999896; border-radius: 3px; background: linear-gradient(#fafafa, #dfdedc); }
.hscroll svg, .vscroll svg, .spin svg { width: 12px; height: 12px; }
.thumb { display: flex; align-items: center; justify-content: center; gap: 2px; border: 1px solid #5679a8; background: linear-gradient(#a6c4ea, #85aadc); }
.hscroll .thumb { flex: 1; }
.thumb i { width: 1px; height: 6px; background: #44679a; }
.rest { background: #d4d3d1; border: 1px solid #aaa9a7; }
.hscroll .rest { width: 12px; }
.grip { width: 47px; height: 6px; align-self: center; background: radial-gradient(#aaa 1px, transparent 1px) 0 0 / 3px 3px; }
.preview { display: flex; gap: 3px; height: 82px; }
.shot { flex: 1; display: flex; justify-content: center; border: 1px solid #9b9a98; overflow: hidden; }
.shot svg { width: 88px; height: 80px; }
.vscroll { width: 15px; display: flex; flex-direction: column; }
.vscroll .thumb { height: 30px; flex-direction: column; }
.vscroll .thumb i { width: 6px; height: 1px; }
.vscroll .rest { flex: 1; }
.act { display: flex; align-items: center; height: 34px; padding: 0 1px; }
.gtk { gap: 4px; height: 32px; border: 1px solid #8f8e8a; border-radius: 4px; background: linear-gradient(#fff, #f3f2f1 50%, #e2e1df); white-space: nowrap; }
.gtk svg { width: 22px; height: 22px; }
.gtk.upd { width: 181px; }
.three { display: grid; grid-template-columns: repeat(3, minmax(0, 1fr)); gap: 2px; }
.auto { display: flex; align-items: center; gap: 7px; margin-left: 4px; }
.auto input { appearance: none; width: 12px; height: 12px; margin: 0; border: 1px solid #777; background: #fff; }
.auto input:checked::before { content: ""; display: block; width: 10px; height: 10px; background: #000; clip-path: polygon(10% 50%, 25% 40%, 40% 65%, 80% 5%, 95% 10%, 45% 95%); }
.spin { display: flex; margin-left: auto; width: 57px; height: 27px; border: 1px solid #8f8e8a; border-radius: 4px; background: #fff; overflow: hidden; }
.spin input { flex: 1; width: 0; border: 0; padding: 0 4px; font: inherit; outline: 0; }
.spin div { display: flex; flex-direction: column; width: 14px; border-left: 1px solid #aaa; background: #edeceb; }
.spin button { flex: 1; overflow: hidden; }
.spin button + button { border-top: 1px solid #aaa; }

.task { height: 26px; border-top: 1px solid #4b6384; box-shadow: inset 0 1px #fff; padding: 1px 3px 0 1px; }
.desk { width: 21px; height: 22px; border: 1px solid #999; border-radius: 4px; background: #f8f8f7; }
.desk svg { width: 16px; height: 16px; }
.dots { width: 6px; height: 18px; margin: 0 3px 0 4px; background: radial-gradient(#999 1px, transparent 1px) 0 0 / 3px 3px; }
.win { width: 227px; height: 22px; gap: 7px; justify-content: flex-start; padding-left: 6px; border: 1px solid #858480; border-radius: 4px; background: linear-gradient(#cdcbc8, #bebcb8); }
.pager { display: flex; gap: 1px; margin-left: auto; width: 105px; height: 22px; padding: 1px; border-radius: 3px; background: #8a8784; overflow: hidden; }
.pager span { flex: 1; display: flex; align-items: center; justify-content: center; background: #a8a5a2; }
.pager .cur { background: #d0e2f8; }
.pager .p1 { background: #fff; }
.p1 svg { width: 24px; height: 20px; }
.trash { width: 20px; height: 22px; margin-left: 4px; }
```
